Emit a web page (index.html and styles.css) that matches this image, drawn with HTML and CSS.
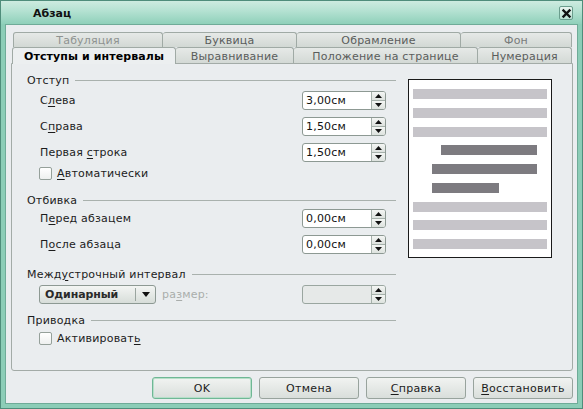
FILE: index.html
```html
<!DOCTYPE html>
<html lang="ru">
<head>
<meta charset="utf-8">
<title>Абзац</title>
<link rel="stylesheet" href="styles.css">
</head>
<body>
<div class="window">
  <div class="titlebar">
    <span class="title">Абзац</span>
    <span class="close"><svg width="11" height="11" viewBox="0 0 11 11"><path d="M2.5 2.5 L8.5 8.5 M8.5 2.5 L2.5 8.5" stroke="#111" stroke-width="2.4" stroke-linecap="square"/></svg></span>
  </div>
  <div class="client">
    <div class="tabs">
      <div class="tabrow row-back">
        <div class="tab t-grey">Табуляция</div>
        <div class="tab">Буквица</div>
        <div class="tab">Обрамление</div>
        <div class="tab t-grey2">Фон</div>
      </div>
      <div class="tabrow row-front">
        <div class="tab active">Отступы и интервалы</div>
        <div class="tab">Выравнивание</div>
        <div class="tab">Положение на странице</div>
        <div class="tab">Нумерация</div>
      </div>
    </div>
    <div class="panel">
      <div class="form">
        <div class="legend"><span>Отступ</span></div>
        <div class="row r-first">
          <span>С<u>л</u>ева</span>
          <div class="spin"><span class="value">3,00см</span><span class="spinbtns"><span class="up"><svg width="7" height="4" viewBox="0 0 7 4"><path d="M0 4 L3.5 0 L7 4Z" fill="#111"/></svg></span><span class="down"><svg width="7" height="4" viewBox="0 0 7 4"><path d="M0 0 L3.5 4 L7 0Z" fill="#111"/></svg></span></span></div>
        </div>
        <div class="row">
          <span>С<u>п</u>рава</span>
          <div class="spin"><span class="value">1,50см</span><span class="spinbtns"><span class="up"><svg width="7" height="4" viewBox="0 0 7 4"><path d="M0 4 L3.5 0 L7 4Z" fill="#111"/></svg></span><span class="down"><svg width="7" height="4" viewBox="0 0 7 4"><path d="M0 0 L3.5 4 L7 0Z" fill="#111"/></svg></span></span></div>
        </div>
        <div class="row">
          <span>Первая <u>с</u>трока</span>
          <div class="spin"><span class="value">1,50см</span><span class="spinbtns"><span class="up"><svg width="7" height="4" viewBox="0 0 7 4"><path d="M0 4 L3.5 0 L7 4Z" fill="#111"/></svg></span><span class="down"><svg width="7" height="4" viewBox="0 0 7 4"><path d="M0 0 L3.5 4 L7 0Z" fill="#111"/></svg></span></span></div>
        </div>
        <div class="check c-auto"><span class="box"></span><span><u>А</u>втоматически</span></div>

        <div class="legend l-second"><span>Отбивка</span></div>
        <div class="row r-tight">
          <span>П<u>е</u>ред абзацем</span>
          <div class="spin"><span class="value">0,00см</span><span class="spinbtns"><span class="up"><svg width="7" height="4" viewBox="0 0 7 4"><path d="M0 4 L3.5 0 L7 4Z" fill="#111"/></svg></span><span class="down"><svg width="7" height="4" viewBox="0 0 7 4"><path d="M0 0 L3.5 4 L7 0Z" fill="#111"/></svg></span></span></div>
        </div>
        <div class="row">
          <span>П<u>о</u>сле абзаца</span>
          <div class="spin"><span class="value">0,00см</span><span class="spinbtns"><span class="up"><svg width="7" height="4" viewBox="0 0 7 4"><path d="M0 4 L3.5 0 L7 4Z" fill="#111"/></svg></span><span class="down"><svg width="7" height="4" viewBox="0 0 7 4"><path d="M0 0 L3.5 4 L7 0Z" fill="#111"/></svg></span></span></div>
        </div>

        <div class="legend l-third"><span>Межд<u>у</u>строчный интервал</span></div>
        <div class="row r-combo">
          <div class="combo-wrap">
            <div class="combo"><span class="combo-text">Одинарный</span><span class="combo-arrow"><svg width="8" height="5" viewBox="0 0 8 5"><path d="M0 0 L4 5 L8 0Z" fill="#111"/></svg></span></div>
            <span class="muted">ра<u>з</u>мер:</span>
          </div>
          <div class="spin disabled"><span class="value"></span><span class="spinbtns"><span class="up"><svg width="7" height="4" viewBox="0 0 7 4"><path d="M0 4 L3.5 0 L7 4Z" fill="#111"/></svg></span><span class="down"><svg width="7" height="4" viewBox="0 0 7 4"><path d="M0 0 L3.5 4 L7 0Z" fill="#111"/></svg></span></span></div>
        </div>

        <div class="legend l-fourth"><span>Приводка</span></div>
        <div class="check c-act"><span class="box"></span><span>Активироват<u>ь</u></span></div>
      </div>
      <div class="preview">
        <div class="bar light"></div>
        <div class="bar light"></div>
        <div class="bar light"></div>
        <div class="bar dark d1"></div>
        <div class="bar dark d2"></div>
        <div class="bar dark d3"></div>
        <div class="bar light"></div>
        <div class="bar light"></div>
        <div class="bar light"></div>
      </div>
    </div>
    <div class="buttons">
      <button class="btn default">OK</button>
      <button class="btn">Отмена</button>
      <button class="btn"><u>С</u>правка</button>
      <button class="btn"><u>В</u>осстановить</button>
    </div>
  </div>
</div>
</body>
</html>
```

FILE: styles.css
```css
* { box-sizing: border-box; }
html, body { margin: 0; padding: 0; }
body {
  width: 583px;
  height: 409px;
  font-family: "DejaVu Sans", "Noto Sans", sans-serif;
  font-size: 11px;
  letter-spacing: 0.2px;
  color: #1c1c1c;
  background: #ffffff;
}
u { text-decoration: underline; text-underline-offset: 2px; }

.window {
  width: 583px;
  height: 409px;
  border: 1px solid #4f8d7b;
  background: #8ccdb7;
  padding: 0 4px 4px 4px;
  display: flex;
  flex-direction: column;
}

.titlebar {
  height: 23px;
  margin: 0 -4px;
  padding: 0 4px 0 32px;
  display: flex;
  align-items: center;
  justify-content: space-between;
  background: linear-gradient(#cdebe0 0%, #b3e1d1 45%, #8fd0ba 100%);
}
.title { font-weight: bold; color: #111; padding-top: 1px; letter-spacing: 0; }
.close {
  width: 14px;
  height: 14px;
  margin-right: 5px;
  margin-top: 1px;
  border: 1px solid #6a9d8d;
  border-radius: 2px;
  background: linear-gradient(#e8f5ef, #b9e0d2);
  display: flex;
  align-items: center;
  justify-content: center;
}

.client {
  flex: 1;
  background: #eaedef;
  border: 1px solid #6fab98;
  padding: 7px 4px 4px 6px;
  display: flex;
  flex-direction: column;
}

.tabs { display: flex; flex-direction: column; margin-left: 1px; }
.tabrow { display: grid; }
.row-back { grid-template-columns: 150px 134px 164px 111px; height: 15px; }
.row-front { grid-template-columns: 163px 118px 184px 94px; height: 16px; }
.tab {
  border: 1px solid #a0aaa5;
  border-left: none;
  border-bottom: none;
  border-radius: 3px 3px 0 0;
  background: linear-gradient(#e6e9e7, #d2d8d4);
  color: #5a5d5c;
  display: flex;
  align-items: center;
  justify-content: center;
  white-space: nowrap;
  overflow: hidden;
}
.tab:first-child { border-left: 1px solid #a0aaa5; }
.row-back .tab { padding-top: 0; }
.t-grey { color: #8f9391; }
.t-grey2 { color: #787b7a; }
.row-front .tab { padding-top: 1px; }
.tab.active {
  background: #eceff0;
  color: #000;
  font-weight: bold;
  letter-spacing: 0.1px;
  margin-left: -1px;
  height: 17px;
  position: relative;
  z-index: 1;
  padding-top: 0;
}

.panel {
  height: 308px;
  margin-left: -1px;
  border: 1px solid #a3aba7;
  border-radius: 0 0 3px 3px;
  background: #eaedef;
  padding: 9px 18px 0 15px;
  display: flex;
  gap: 12px;
}

.form { width: 369px; display: flex; flex-direction: column; }
.legend {
  height: 14px;
  display: flex;
  align-items: center;
  gap: 6px;
  color: #1c1c1c;
  white-space: nowrap;
}
.legend::after {
  content: "";
  flex: 1;
  border-top: 1px solid #a9b1ad;
  margin-top: 1px;
}
.l-second { margin-top: 13px; }
.l-third { margin-top: 13px; }
.l-fourth { margin-top: 9px; }

.row {
  height: 19px;
  margin-top: 7px;
  padding: 0 10px 0 13px;
  display: flex;
  align-items: center;
  justify-content: space-between;
}
.r-first { margin-top: 4px; }
.r-tight { margin-top: 2px; }
.r-combo { margin-top: 4px; padding-left: 12px; }

.spin {
  width: 84px;
  height: 19px;
  border: 1px solid #8d9993;
  border-radius: 3px;
  background: #ffffff;
  display: flex;
  overflow: hidden;
}
.spin .value { flex: 1; padding-left: 3px; display: flex; align-items: center; color: #111; }
.spinbtns {
  width: 14px;
  display: flex;
  flex-direction: column;
  border-left: 1px solid #a5b0aa;
}
.spinbtns span {
  flex: 1;
  display: flex;
  align-items: center;
  justify-content: center;
  background: linear-gradient(#f4f6f4, #dde2de);
}
.spinbtns .down { border-top: 1px solid #a5b0aa; }
.spin.disabled { background: #e6e9e8; border-color: #9aa6a0; }

.check {
  height: 13px;
  display: flex;
  align-items: center;
  gap: 5px;
  padding-left: 12px;
}
.c-auto { margin-top: 5px; }
.c-act { margin-top: 5px; }
.box {
  width: 13px;
  height: 13px;
  border: 1px solid #95a09a;
  border-radius: 2px;
  background: linear-gradient(#ffffff, #eef0ef);
}

.combo-wrap { display: flex; align-items: center; gap: 6px; }
.combo {
  width: 117px;
  height: 19px;
  border: 1px solid #8d9993;
  border-radius: 3px;
  background: linear-gradient(#f3f5f3, #d7ddd9);
  display: flex;
  align-items: center;
}
.combo-text { flex: 1; padding-left: 5px; font-weight: bold; color: #2a2a2a; letter-spacing: -0.1px; }
.combo-arrow {
  width: 20px;
  height: 13px;
  border-left: 1px solid #9aa59f;
  display: flex;
  align-items: center;
  justify-content: center;
}
.muted { color: #a9adab; }

.preview {
  width: 144px;
  height: 179px;
  margin-top: 6px;
  border: 1px solid #1a1a1a;
  background: #ffffff;
  padding: 9px 4px 0 4px;
  display: flex;
  flex-direction: column;
  gap: 8.75px;
}
.bar { height: 10px; flex: none; }
.light { background: #c6c4c9; }
.dark { background: #7d7b80; }
.d1 { margin-left: 28px; margin-right: 10px; }
.d2 { margin-left: 19px; margin-right: 10px; }
.d3 { margin-left: 19px; width: 67px; }

.buttons {
  margin-top: 6px;
  height: 22px;
  display: flex;
  justify-content: flex-end;
  gap: 7px;
}
.btn {
  width: 100px;
  height: 22px;
  font-family: inherit;
  font-size: 11px;
  letter-spacing: 0.3px;
  color: #1c1c1c;
  border: 1px solid #98a39d;
  border-radius: 3px;
  background: linear-gradient(#f1f3f1, #d9dedb);
  padding: 0;
}
.btn.default { border: 1px solid #6fb795; box-shadow: inset 0 0 0 1px #b6dfc9; }
```
